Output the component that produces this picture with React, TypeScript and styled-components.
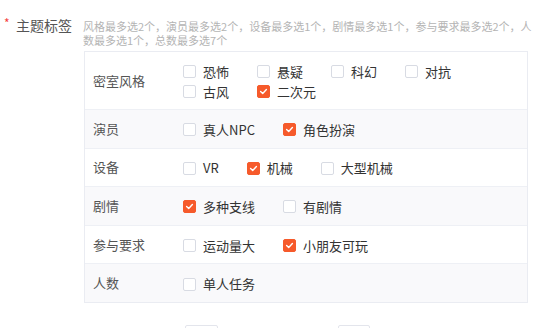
import React from "react";
import styled, { createGlobalStyle } from "styled-components";

const Global = createGlobalStyle`
  html, body { margin: 0; padding: 0; background: #fff; overflow: hidden; }
  body { font-family: "Noto Sans CJK SC", "Noto Sans", sans-serif; }
`;

const Page = styled.div`
  width: 554px;
  height: 328px;
  overflow: hidden;
  padding-top: 15px;
  box-sizing: border-box;
`;

const FormItem = styled.div`
  display: flex;
  align-items: flex-start;
`;

const FieldLabel = styled.div`
  width: 83px;
  flex: none;
  display: flex;
  align-items: flex-start;
  padding-left: 4px;
  box-sizing: border-box;
  font-size: 14px;
  line-height: 20px;
  color: #555;
`;

const Required = styled.span`
  color: #f5413d;
  font-size: 12px;
  line-height: 16px;
  width: 12px;
`;

const Content = styled.div`
  width: 445px;
  display: flex;
  flex-direction: column;
`;

const Hint = styled.div`
  font-size: 11px;
  color: #b4b4b4;
  padding-top: 4px;
  margin-bottom: 4px;
  white-space: nowrap;
  display: flex;
  flex-direction: column;
`;

const HintLine = styled.span`
  display: block;
  height: 14px;
  line-height: 15px;
`;

const Table = styled.div`
  margin-left: 1px;
  border: 1px solid #eaecf2;
  display: flex;
  flex-direction: column;
`;

const Row = styled.div<{ $tall?: boolean; $shade?: boolean }>`
  display: flex;
  align-items: center;
  box-sizing: border-box;
  height: ${(p) => (p.$tall ? 58 : 38.6)}px;
  background: ${(p) => (p.$shade ? "#f9f9fb" : "#fff")};
  border-top: 1px solid #eef0f5;
  &:first-child { border-top: none; height: 57px; }
`;

const RowLabel = styled.div`
  width: 98px;
  flex: none;
  padding-left: 8px;
  box-sizing: border-box;
  font-size: 13px;
  color: #555;
  line-height: 20px;
`;

const Options = styled.div`
  flex: 1;
  display: flex;
  flex-wrap: wrap;
  padding-right: 8px;
  padding-top: 2px;
`;

const Option = styled.label`
  display: flex;
  align-items: center;
  margin-right: 28px;
  font-size: 13px;
  line-height: 20px;
  color: #333;
`;

const Box = styled.span<{ $checked?: boolean }>`
  width: 13px;
  height: 13px;
  box-sizing: border-box;
  border-radius: 2px;
  border: 1px solid ${(p) => (p.$checked ? "#f65a2b" : "#d8dbe3")};
  background: ${(p) => (p.$checked ? "#f65a2b" : "#fff")};
  margin-right: 7px;
  display: flex;
  align-items: center;
  justify-content: center;
`;

const BottomRow = styled.div`
  display: flex;
  padding-top: 22px;
  padding-left: 185px;
  gap: 120px;
`;

const StubBox = styled.div<{ $w: number }>`
  width: ${(p) => p.$w}px;
  height: 12px;
  border: 1px solid #e3e5ec;
  border-radius: 2px;
  box-sizing: border-box;
`;

const Check = () => (
  <svg width="9" height="9" viewBox="0 0 9 9">
    <path d="M1.6 4.6 L3.7 6.6 L7.4 2.6" fill="none" stroke="#fff" strokeWidth="1.4" strokeLinecap="round" strokeLinejoin="round" />
  </svg>
);

type Opt = [string, boolean];
const rows: { label: string; opts: Opt[] }[] = [
  { label: "密室风格", opts: [["恐怖", false], ["悬疑", false], ["科幻", false], ["对抗", false], ["古风", false], ["二次元", true]] },
  { label: "演员", opts: [["真人NPC", false], ["角色扮演", true]] },
  { label: "设备", opts: [["VR", false], ["机械", true], ["大型机械", false]] },
  { label: "剧情", opts: [["多种支线", true], ["有剧情", false]] },
  { label: "参与要求", opts: [["运动量大", false], ["小朋友可玩", true]] },
  { label: "人数", opts: [["单人任务", false]] },
];

export default function App() {
  return (
    <Page>
      <Global />
      <FormItem>
        <FieldLabel>
          <Required>*</Required>
          <span>主题标签</span>
        </FieldLabel>
        <Content>
          <Hint>
            <HintLine>风格最多选2个，演员最多选2个，设备最多选1个，剧情最多选1个，参与要求最多选2个，人</HintLine>
            <HintLine>数最多选1个，总数最多选7个</HintLine>
          </Hint>
          <Table>
            {rows.map((r, i) => (
              <Row key={r.label} $tall={i === 0} $shade={i % 2 === 1}>
                <RowLabel>{r.label}</RowLabel>
                <Options>
                  {r.opts.map(([t, c]) => (
                    <Option key={t}>
                      <Box $checked={c}>{c && <Check />}</Box>
                      {t}
                    </Option>
                  ))}
                </Options>
              </Row>
            ))}
          </Table>
        </Content>
      </FormItem>
      <BottomRow>
        <StubBox $w={33} />
        <StubBox $w={32} />
      </BottomRow>
    </Page>
  );
}
